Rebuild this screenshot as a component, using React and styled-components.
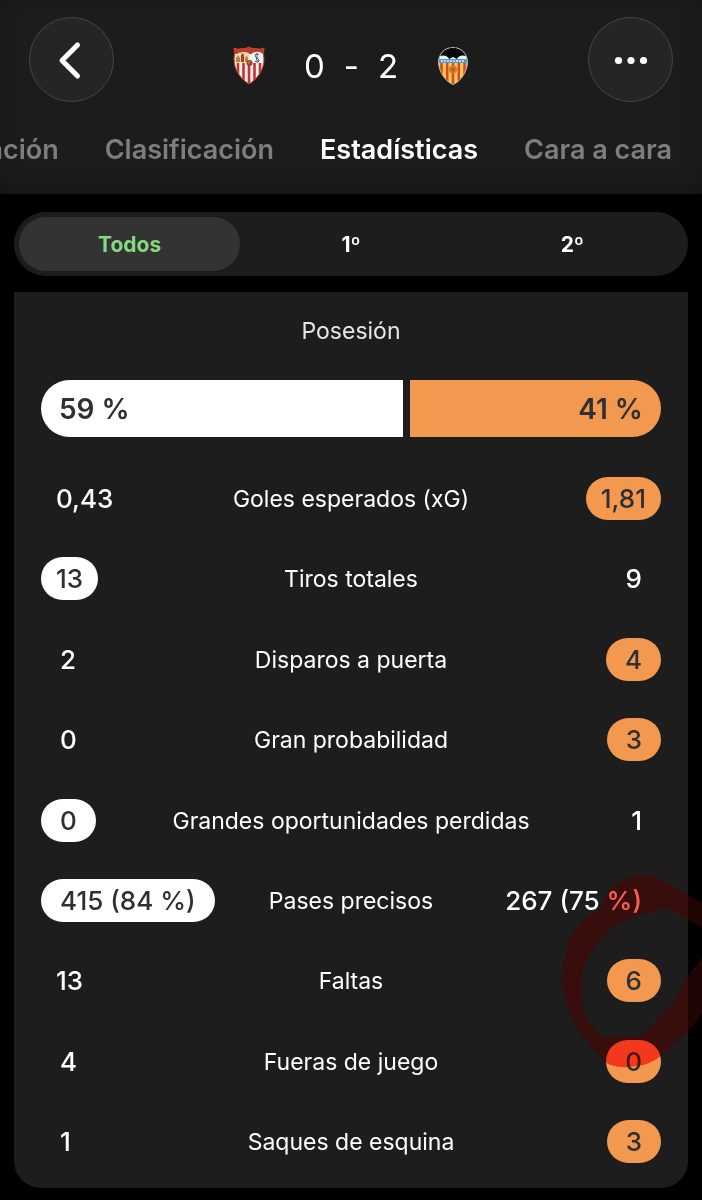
import { useState } from 'react'
import styled, { createGlobalStyle } from 'styled-components'

const sections = ['Alineación', 'Clasificación', 'Estadísticas', 'Cara a cara']
const periods = ['Todos', '1º', '2º']
const possession = { home: 59, away: 41 }

const stats = [
	{ name: 'Goles esperados (xG)', home: '0,43', away: '1,81', best: 'away' },
	{ name: 'Tiros totales', home: '13', away: '9', best: 'home' },
	{ name: 'Disparos a puerta', home: '2', away: '4', best: 'away' },
	{ name: 'Gran probabilidad', home: '0', away: '3', best: 'away' },
	{ name: 'Grandes oportunidades perdidas', home: '0', away: '1', best: 'home' },
	{ name: 'Pases precisos', home: '415 (84 %)', away: '267 (75 %)', best: 'home' },
	{ name: 'Faltas', home: '13', away: '6', best: 'away' },
	{ name: 'Fueras de juego', home: '4', away: '0', best: 'away' },
	{ name: 'Saques de esquina', home: '1', away: '3', best: 'away' }
]

const markPath = 'M70 17 Q84 13 98 18 L144 44 V69 L113 50 Q102 47 90 53 Q74 54 60 63 Q42 74 33 90 Q22 104 22 120 Q20 135 23 148 Q28 164 40 175 Q62 178 83 175 L113 143 L127 117 L144 95 V151 L127 173 L98 198 Q88 205 77 206 Q60 209 48 204 Q34 193 23 177 Q10 160 7 143 Q0 128 2 113 Q4 98 8 83 Q16 66 28 56 Q38 54 43 42 Q46 28 70 17Z'

// one digit and percentages get more room at the sides
const isRoomy = value => value.length === 1 || value.includes('%')

const App = () => {

	const [section, setSection] = useState(2)
	const [period, setPeriod] = useState(0)

	return (
		<Page>
			<GlobalStyle />
			<Header>
				<TopBar>
					<RoundButton aria-label="Atrás">
						<svg width="40" height="40" viewBox="0 0 40 40" fill="none" stroke="#fff" strokeWidth="5" strokeLinecap="round" strokeLinejoin="round">
							<path d="M25.500 5 L10 20.500 L25.500 36" />
						</svg>
					</RoundButton>
					<Title>
						<SevillaBadge />
						<Score>
							<span>0</span>
							<span>-</span>
							<span>2</span>
						</Score>
						<ValenciaBadge />
					</Title>
					<RoundButton aria-label="Más opciones">
						<svg width="40" height="40" viewBox="0 0 40 40" fill="#fff">
							<circle cx="7.500" cy="20.500" r="3.600" />
							<circle cx="20" cy="20.500" r="3.600" />
							<circle cx="32.500" cy="20.500" r="3.600" />
						</svg>
					</RoundButton>
				</TopBar>
				<Sections>
					{
						sections.map((name, idx) =>
							<SectionTab key={name} $active={section === idx} onClick={() => setSection(idx)}>
								{name}
							</SectionTab>
						)
					}
				</Sections>
			</Header>
			<Content>
				<Periods>
					{
						periods.map((name, idx) =>
							<PeriodButton key={name} $active={period === idx} onClick={() => setPeriod(idx)}>
								{name}
							</PeriodButton>
						)
					}
				</Periods>
				<Card>
					<CardTitle>Posesión</CardTitle>
					<PossessionBar style={{ gridTemplateColumns: `${possession.home}fr ${possession.away}fr` }}>
						<Share $side="home">{possession.home} %</Share>
						<Share $side="away">{possession.away} %</Share>
					</PossessionBar>
					<StatTable>
						<StatRows>
							{
								stats.map(stat =>
									<StatRow key={stat.name}>
										<Cell>
											<Value $fill={stat.best === 'home' && '#fff'} $roomy={isRoomy(stat.home)}>{stat.home}</Value>
										</Cell>
										<StatName scope="row">{stat.name}</StatName>
										<Cell $end>
											<Value $fill={stat.best === 'away' && '#f2984f'} $roomy={isRoomy(stat.away)}>{stat.away}</Value>
										</Cell>
									</StatRow>
								)
							}
						</StatRows>
					</StatTable>
				</Card>
			</Content>
			<Mark>
				<svg width="142" height="210" viewBox="0 0 142 210">
					<MarkInk d={markPath} fill="#ff645a" />
					<path d={markPath} fill="#ff1e1e" fillOpacity="0.12" />
				</svg>
			</Mark>
		</Page>
	)
}

const SevillaBadge = () => (
	<svg width="34" height="40" viewBox="0 0 34 40" role="img" aria-label="Sevilla">
		<defs>
			<clipPath id="sevilla">
				<path d="M2 2 Q6 4 10 2.500 Q14 3 17 1 Q20 3 24 2.500 Q28 4 32 2 Q31 7 32 13 C32 25 24 34 17 38 C10 34 2 25 2 13 Q3 7 2 2Z" />
			</clipPath>
		</defs>
		<g clipPath="url(#sevilla)">
			<rect width="34" height="40" fill="#f7f0ea" />
			<rect width="34" height="8" fill="#c23a2b" />
			<path d="M3 9 Q9 4 17 7 V17 H3Z" fill="#ecd9b4" />
			<path d="M18 9 Q25 3 31 8 V17 H18Z" fill="#f5f5f5" />
			<path d="M6 17V40M11.500 17V40M17 17V40M22.500 17V40M28 17V40" stroke="#c4323c" strokeWidth="2.600" />
			<path d="M4 16V12L6 9.500L8 12V16ZM13 16V12L14.500 9.500L16 12V16Z" fill="#b68243" />
			<path d="M9 16V9L10.500 7L12 9V16Z" fill="#b23b28" />
			<path d="M27 8.500 C23 6 22 11 25 12 C29 14 26 18 23 15 M24 8 C28 10 21 13 27 16" stroke="#3d4458" strokeWidth="1" fill="none" />
			<circle cx="17.500" cy="17" r="3" fill="#8e4b1b" />
			<circle cx="17" cy="16.500" r="1.200" fill="#c07a2a" />
		</g>
		<path d="M2 2 Q6 4 10 2.500 Q14 3 17 1 Q20 3 24 2.500 Q28 4 32 2 Q31 7 32 13 C32 25 24 34 17 38 C10 34 2 25 2 13 Q3 7 2 2Z" fill="none" stroke="#ae422e" strokeWidth="1" />
	</svg>
)

const ValenciaBadge = () => (
	<svg width="34" height="40" viewBox="0 0 34 40" role="img" aria-label="Valencia">
		<defs>
			<clipPath id="valencia">
				<path d="M17 1.500 C26 1.500 31 8 31.500 16 C31.500 26 24 36 17 38.500 C10 36 2.500 26 2.500 16 C3 8 8 1.500 17 1.500Z" />
			</clipPath>
		</defs>
		<g clipPath="url(#valencia)">
			<rect width="34" height="40" fill="#f9cb4d" />
			<path d="M5.500 15V40M11.200 15V40M17 15V40M22.800 15V40M28.500 15V40" stroke="#d9482c" strokeWidth="2.600" />
			<rect width="34" height="14" fill="#e9f2f8" />
			<path d="M0 0H34V14Q31 9 26 9.500Q22 10 21 13L17 11L13 13Q12 10 8 9.500Q3 9 0 14Z" fill="#050505" />
			<rect y="13" width="34" height="4" fill="#4d9bd0" />
			<path d="M5 15H29" stroke="#d4ecf7" strokeWidth="1.400" strokeDasharray="2 1" />
			<circle cx="17" cy="23.500" r="4" fill="#cf7c2c" />
			<circle cx="17" cy="23.500" r="2" fill="#b85e28" />
		</g>
		<path d="M17 1.500 C26 1.500 31 8 31.500 16 C31.500 26 24 36 17 38.500 C10 36 2.500 26 2.500 16 C3 8 8 1.500 17 1.500Z" fill="none" stroke="#b5b5a4" strokeWidth="1" />
		<path d="M14.500 1 L16 3 H18 L19.500 1 L20 6 H14Z" fill="#050505" />
	</svg>
)

const GlobalStyle = createGlobalStyle`
	* {
		box-sizing: border-box;
	}

	body {
		margin: 0;
		background: #000;
		color: #fff;
		font-family: Inter, 'Liberation Sans', sans-serif;
	}
`

const Button = styled.button`
	border: 0;
	padding: 0;
	background: none;
	color: inherit;
	font-family: inherit;
	cursor: pointer;
`

const Page = styled.div`
	position: relative;
	overflow: hidden;
	padding-bottom: 12px;
`

const Header = styled.header`
	padding-top: 17px;
	background: #1c1c1c;
	box-shadow: inset 0 -8px 24px -4px rgba(0, 0, 0, 0.3);
`

const TopBar = styled.div`
	display: flex;
	justify-content: space-between;
	padding: 0 29px;
`

const RoundButton = styled(Button)`
	display: flex;
	align-items: center;
	justify-content: center;
	width: 85px;
	height: 85px;
	border: 1px solid #464646;
	border-radius: 50%;
	background: #252525;
`

const Title = styled.div`
	display: flex;
	align-items: center;
	gap: 38px;
	padding-top: 12px;
`

const Score = styled.div`
	display: flex;
	gap: 19px;
	font-size: 33px;
	line-height: 40px;
`

const Sections = styled.nav`
	display: flex;
	justify-content: flex-end;
	gap: 46px;
	padding: 28px 30px 24px;
	overflow: hidden;
`

const SectionTab = styled(Button)`
	flex: none;
	color: ${props => props.$active ? '#fff' : '#7e7e7e'};
	font-size: 27px;
	font-weight: 600;
	line-height: 40px;
`

const Content = styled.main`
	padding: 18px 14px 0;
`

const Periods = styled.div`
	display: grid;
	grid-template-columns: repeat(3, 1fr);
	padding: 5px;
	border-radius: 32px;
	background: #1d1d1d;
`

const PeriodButton = styled(Button)`
	height: 54px;
	border-radius: 27px;
	background: ${props => props.$active ? '#333' : 'none'};
	color: ${props => props.$active ? '#86d881' : '#fff'};
	font-size: 21px;
	font-weight: 700;
`

const Card = styled.section`
	margin-top: 16px;
	padding: 23px 27px 25px;
	border-radius: 0 0 27px 27px;
	background: #1d1d1d;
`

const CardTitle = styled.h2`
	margin: 0;
	color: #e6e6e6;
	font-size: 23px;
	font-weight: 400;
	line-height: 32px;
	text-align: center;
`

const PossessionBar = styled.div`
	display: grid;
	gap: 7px;
	margin-top: 33px;
`

const Share = styled.div`
	padding: 1px 18px 0;
	border-radius: ${props => props.$side === 'home' ? '29px 0 0 29px' : '0 29px 29px 0'};
	background: ${props => props.$side === 'home' ? '#fff' : '#f2984f'};
	color: #303030;
	font-size: 28px;
	font-weight: 600;
	line-height: 56px;
	text-align: ${props => props.$side === 'home' ? 'left' : 'right'};
	white-space: nowrap;
`

const StatTable = styled.table`
	display: block;
	margin-top: 40px;
`

const StatRows = styled.tbody`
	display: grid;
	align-content: space-between;
	min-height: 686px;
`

const StatRow = styled.tr`
	display: grid;
	grid-template-columns: 1fr auto 1fr;
	align-items: center;
`

const Cell = styled.td`
	display: flex;
	justify-content: ${props => props.$end ? 'flex-end' : 'flex-start'};
	padding: 0;
`

const StatName = styled.th`
	padding: 1px 0 0;
	font-size: 23px;
	font-weight: 400;
	white-space: nowrap;
`

const Value = styled.span`
	padding: 1px ${props => props.$roomy ? '19px' : '15px'} 0;
	border-radius: 22px;
	background: ${props => props.$fill || 'none'};
	color: ${props => props.$fill ? '#303030' : '#fff'};
	font-size: 26px;
	font-weight: 500;
	line-height: 42px;
	white-space: nowrap;
`

// hand-drawn circle over the fouls row
const Mark = styled.div`
	position: absolute;
	right: 0;
	top: 860px;
	pointer-events: none;

	svg {
		display: block;
	}
`

const MarkInk = styled.path`
	mix-blend-mode: multiply;
`

export default App
